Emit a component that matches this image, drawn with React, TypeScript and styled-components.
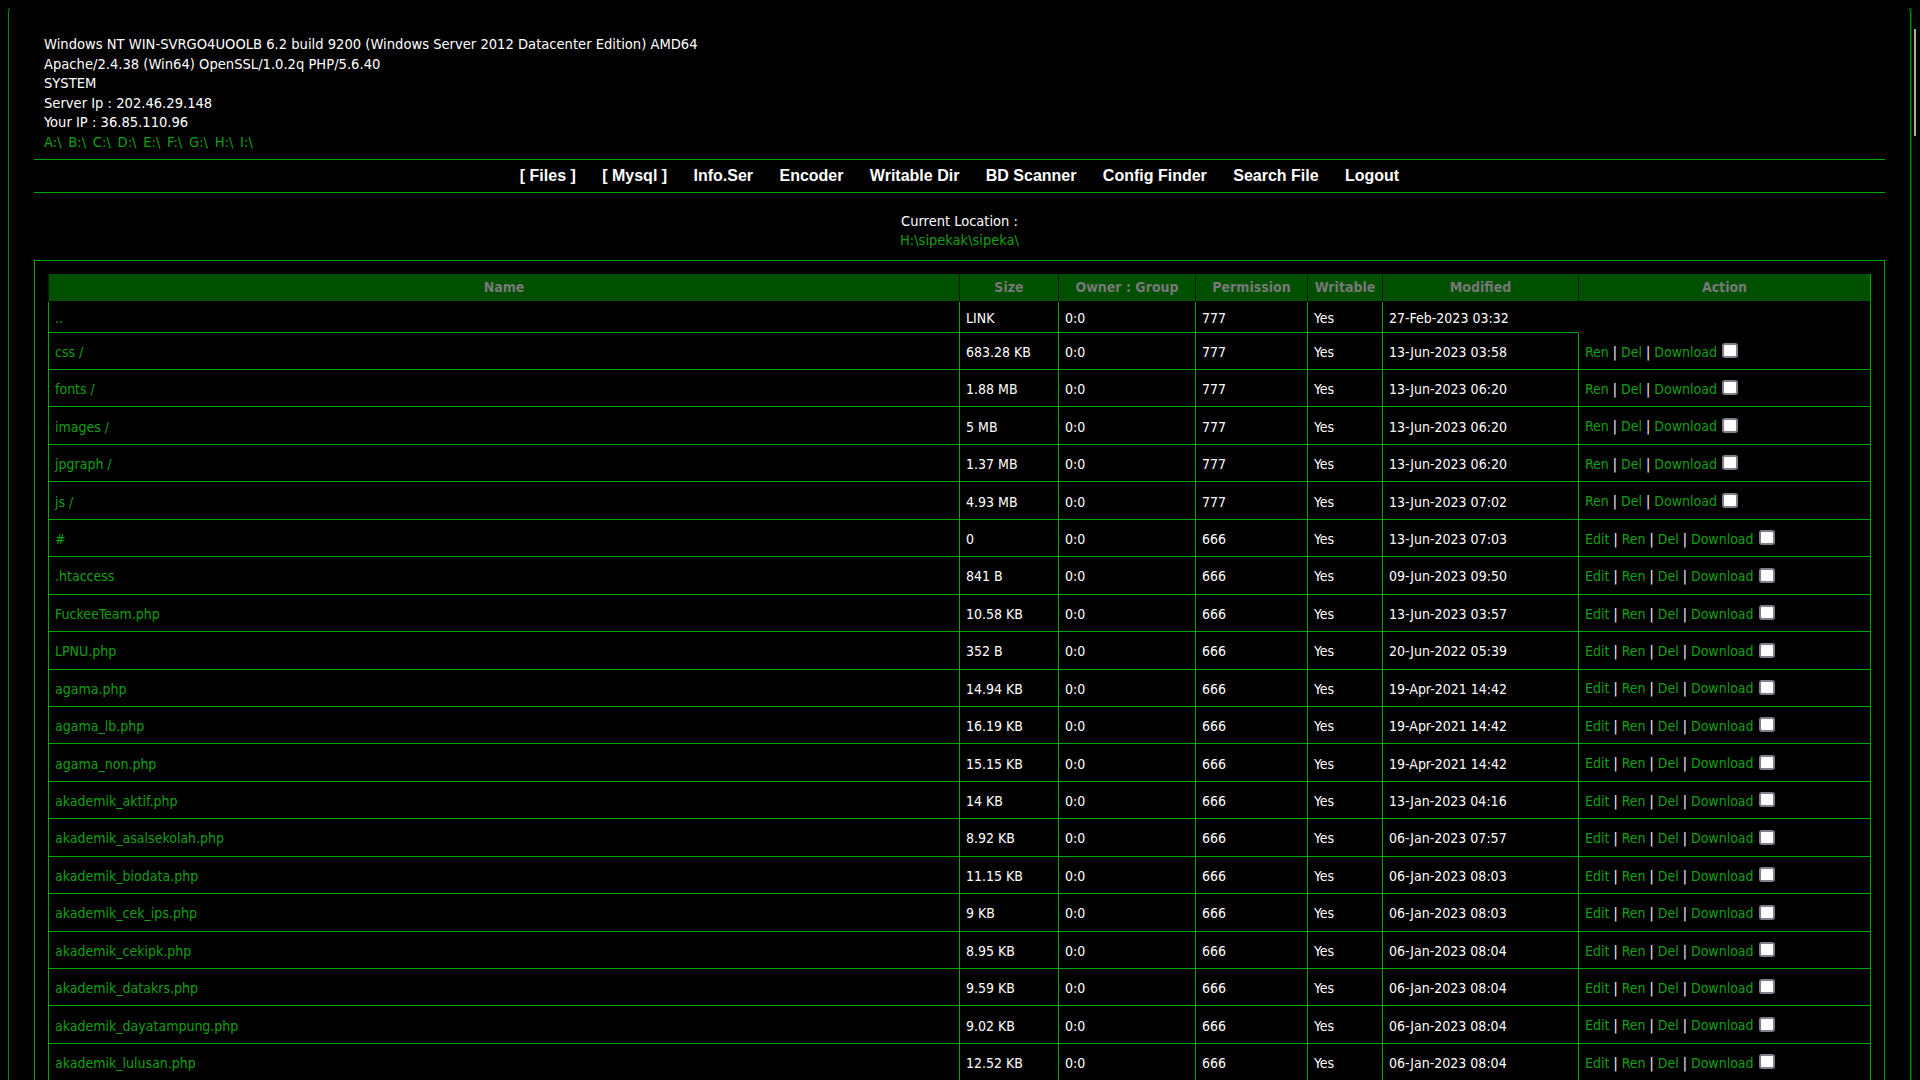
import React from "react";
import styled, { createGlobalStyle } from "styled-components";

const LINE = "#00a800";
const LINK = "#11a011";

const GlobalStyle = createGlobalStyle`
  html, body { background: #000; }
  body {
    margin: 8px;
    color: #fff;
    font-family: "DejaVu Sans Condensed", "DejaVu Sans", sans-serif;
    font-stretch: condensed;
    overflow: hidden;
  }
  a { color: ${LINK}; text-decoration: none; }
`;

const Frame = styled.div`
  margin: -11px 1px 0 0;
  border: 1px solid #009000;
  border-radius: 15px;
  box-shadow: 0 0 9px 1px rgba(0, 170, 0, 0.75);
  padding: 36px 25px 40px;
`;

const ScrollThumb = styled.div`
  position: fixed;
  top: 29px;
  right: 4px;
  width: 2px;
  height: 107px;
  background: #a9a9a9;
`;

const Info = styled.div`
  padding-left: 10px;
  font-size: 14.6px;
  line-height: 19.6px;
`;

const Drives = styled.div`
  color: ${LINK};
  word-spacing: 2.5px;
`;

const Nav = styled.nav`
  margin-top: 7px;
  height: 34px;
  box-sizing: border-box;
  border-top: 1px solid ${LINE};
  border-bottom: 1px solid ${LINE};
  display: flex;
  justify-content: center;
  align-items: center;
  gap: 26.4px;
`;

const NavLink = styled.a`
  && {
    color: #fff;
  }
  font-family: "Liberation Sans", Arial, sans-serif;
  font-stretch: normal;
  font-weight: bold;
  font-size: 16px;
`;

const Location = styled.div`
  margin-top: 19.5px;
  text-align: center;
  font-size: 14.5px;
  line-height: 19px;
`;

const Path = styled.div`
  color: ${LINK};
`;

const Box = styled.div`
  margin-top: 9.5px;
  border: 1px solid ${LINE};
  padding: 13px;
`;

const Table = styled.table`
  width: 100%;
  border-spacing: 0;
  table-layout: fixed;
  border-right: 1px solid ${LINE};
  font-size: 14px;
`;

const Col = styled.col<{ $w: number }>`
  width: ${(p) => p.$w}px;
`;

const Th = styled.th`
  height: 27px;
  padding: 0;
  background: #005000;
  color: #787878;
  font-weight: bold;
  text-align: center;
  border-left: 1px solid #001c00;
  border-bottom: 1px solid #000;
`;

const Row = styled.tr<{ $short?: boolean }>`
  height: ${(p) => (p.$short ? 31 : 37.45)}px;
`;

const Td = styled.td`
  padding: 2px 6px 0;
  border-left: 1px solid ${LINE};
  border-bottom: 1px solid ${LINE};
  white-space: nowrap;
  overflow: hidden;
  vertical-align: middle;
`;

const Pipe = styled.span`
  color: #fff;
`;

const Check = styled.input`
  appearance: none;
  -webkit-appearance: none;
  box-sizing: border-box;
  width: 16px;
  height: 15px;
  margin: 0 0 0 1px;
  background: #fff;
  border: 2px solid #7f7f8a;
  border-radius: 3px;
  vertical-align: middle;
  position: relative;
  top: -2px;
`;

type Entry = [string, string, string];

const dirs: Entry[] = [
  ["css", "683.28 KB", "13-Jun-2023 03:58"],
  ["fonts", "1.88 MB", "13-Jun-2023 06:20"],
  ["images", "5 MB", "13-Jun-2023 06:20"],
  ["jpgraph", "1.37 MB", "13-Jun-2023 06:20"],
  ["js", "4.93 MB", "13-Jun-2023 07:02"],
];

const files: Entry[] = [
  ["#", "0", "13-Jun-2023 07:03"],
  [".htaccess", "841 B", "09-Jun-2023 09:50"],
  ["FuckeeTeam.php", "10.58 KB", "13-Jun-2023 03:57"],
  ["LPNU.php", "352 B", "20-Jun-2022 05:39"],
  ["agama.php", "14.94 KB", "19-Apr-2021 14:42"],
  ["agama_lb.php", "16.19 KB", "19-Apr-2021 14:42"],
  ["agama_non.php", "15.15 KB", "19-Apr-2021 14:42"],
  ["akademik_aktif.php", "14 KB", "13-Jan-2023 04:16"],
  ["akademik_asalsekolah.php", "8.92 KB", "06-Jan-2023 07:57"],
  ["akademik_biodata.php", "11.15 KB", "06-Jan-2023 08:03"],
  ["akademik_cek_ips.php", "9 KB", "06-Jan-2023 08:03"],
  ["akademik_cekipk.php", "8.95 KB", "06-Jan-2023 08:04"],
  ["akademik_datakrs.php", "9.59 KB", "06-Jan-2023 08:04"],
  ["akademik_dayatampung.php", "9.02 KB", "06-Jan-2023 08:04"],
  ["akademik_lulusan.php", "12.52 KB", "06-Jan-2023 08:04"],
];

const navItems = [
  "[ Files ]",
  "[ Mysql ]",
  "Info.Ser",
  "Encoder",
  "Writable Dir",
  "BD Scanner",
  "Config Finder",
  "Search File",
  "Logout",
];

const drives = ["A", "B", "C", "D", "E", "F", "G", "H", "I"];

const colWidths = [911, 99, 137, 112, 75, 196, 292];
const heads = ["Name", "Size", "Owner : Group", "Permission", "Writable", "Modified", "Action"];

function Actions({ file }: { file: boolean }) {
  const items = file ? ["Edit", "Ren", "Del", "Download"] : ["Ren", "Del", "Download"];
  return (
    <>
      {items.map((it, i) => (
        <React.Fragment key={it}>
          {i > 0 && <Pipe> | </Pipe>}
          <a href="#">{it}</a>
        </React.Fragment>
      ))}{" "}
      <Check type="checkbox" />
    </>
  );
}

function FileRow({ entry, dir }: { entry: Entry; dir: boolean }) {
  const [name, size, mod] = entry;
  return (
    <Row>
      <Td>
        <a href="#">{dir ? `${name} /` : name}</a>
      </Td>
      <Td>{size}</Td>
      <Td>0:0</Td>
      <Td>{dir ? "777" : "666"}</Td>
      <Td>Yes</Td>
      <Td>{mod}</Td>
      <Td>
        <Actions file={!dir} />
      </Td>
    </Row>
  );
}

export default function App() {
  return (
    <>
      <GlobalStyle />
      <ScrollThumb />
      <Frame>
        <Info>
          <div>Windows NT WIN-SVRGO4UOOLB 6.2 build 9200 (Windows Server 2012 Datacenter Edition) AMD64</div>
          <div>Apache/2.4.38 (Win64) OpenSSL/1.0.2q PHP/5.6.40</div>
          <div>SYSTEM</div>
          <div>Server Ip : 202.46.29.148</div>
          <div>Your IP : 36.85.110.96</div>
          <Drives>
            {drives.map((d, i) => (
              <React.Fragment key={d}>
                {i > 0 && " "}
                <a href="#">{d}:\</a>
              </React.Fragment>
            ))}
          </Drives>
        </Info>
        <Nav>
          {navItems.map((n) => (
            <NavLink key={n} href="#">
              {n}
            </NavLink>
          ))}
        </Nav>
        <Location>
          <div>Current Location :</div>
          <Path>H:\sipekak\sipeka\</Path>
        </Location>
        <Box>
          <Table>
            <colgroup>
              {colWidths.map((w, i) => (
                <Col key={i} $w={w} />
              ))}
            </colgroup>
            <thead>
              <tr>
                {heads.map((h) => (
                  <Th key={h}>{h}</Th>
                ))}
              </tr>
            </thead>
            <tbody>
              <Row $short>
                <Td>
                  <a href="#">..</a>
                </Td>
                <Td>LINK</Td>
                <Td>0:0</Td>
                <Td>777</Td>
                <Td>Yes</Td>
                <Td>27-Feb-2023 03:32</Td>
              </Row>
              {dirs.map((e) => (
                <FileRow key={e[0]} entry={e} dir />
              ))}
              {files.map((e) => (
                <FileRow key={e[0]} entry={e} dir={false} />
              ))}
            </tbody>
          </Table>
        </Box>
      </Frame>
    </>
  );
}
